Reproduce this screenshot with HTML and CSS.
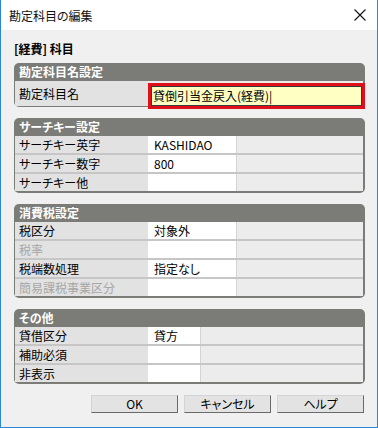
FILE: index.html
```html
<!DOCTYPE html>
<html lang="ja">
<head>
  <meta charset="UTF-8"/>
  <title>勘定科目の編集</title>
  <link rel="stylesheet" href="styles.css">
</head>
<body>
  <div class="window">
    <div class="titlebar">
      <span>勘定科目の編集</span>
      <svg class="close" width="12" height="12" viewBox="0 0 12 12">
        <path d="M0.5 0.5 L11.5 11.5 M11.5 0.5 L0.5 11.5" stroke="#111" stroke-width="1.1" fill="none"/>
      </svg>
    </div>

    <div class="content">
      <div class="heading">[経費] 科目</div>

      <!-- 勘定科目名設定 -->
      <div class="panel">
        <div class="panel-head">勘定科目名設定</div>
        <div class="row row-name">
          <div class="label">勘定科目名</div>
          <div class="name-cell">
            <div class="name-input">貸倒引当金戻入(経費)|</div>
          </div>
        </div>
      </div>

      <!-- サーチキー設定 -->
      <div class="panel">
        <div class="panel-head">サーチキー設定</div>
        <div class="row">
          <div class="label">サーチキー英字</div>
          <div class="value">KASHIDAO</div>
          <div class="rest"></div>
        </div>
        <div class="row">
          <div class="label">サーチキー数字</div>
          <div class="value">800</div>
          <div class="rest"></div>
        </div>
        <div class="row">
          <div class="label">サーチキー他</div>
          <div class="value"></div>
          <div class="rest"></div>
        </div>
      </div>

      <!-- 消費税設定 -->
      <div class="panel">
        <div class="panel-head">消費税設定</div>
        <div class="row">
          <div class="label">税区分</div>
          <div class="value">対象外</div>
          <div class="rest"></div>
        </div>
        <div class="row">
          <div class="label disabled">税率</div>
          <div class="value"></div>
          <div class="rest"></div>
        </div>
        <div class="row">
          <div class="label">税端数処理</div>
          <div class="value">指定なし</div>
          <div class="rest"></div>
        </div>
        <div class="row">
          <div class="label disabled">簡易課税事業区分</div>
          <div class="value"></div>
          <div class="rest"></div>
        </div>
      </div>

      <!-- その他 -->
      <div class="panel panel-other">
        <div class="panel-head">その他</div>
        <div class="row">
          <div class="label">貸借区分</div>
          <div class="value">貸方</div>
          <div class="rest"></div>
        </div>
        <div class="row">
          <div class="label">補助必須</div>
          <div class="value"></div>
          <div class="rest"></div>
        </div>
        <div class="row">
          <div class="label">非表示</div>
          <div class="value"></div>
          <div class="rest"></div>
        </div>
      </div>

      <div class="buttons">
        <button>OK</button>
        <button>キャンセル</button>
        <button>ヘルプ</button>
      </div>
    </div>
  </div>
</body>
</html>
```

FILE: styles.css
```css
* {
  box-sizing: border-box;
}

body {
  margin: 0;
  font-family: "Noto Sans CJK JP", "Noto Sans", sans-serif;
  font-size: 12px;
  font-feature-settings: "palt";
  color: #000;
  background-color: #f0f0f0;
}

.window {
  width: 378px;
  height: 428px;
  border: 1px solid #2b86d6;
  border-top: none;
  display: flex;
  flex-direction: column;
  background-color: #f0f0f0;
}

.titlebar {
  height: 30px;
  background-color: #fff;
  display: flex;
  justify-content: space-between;
  align-items: center;
  padding: 0 11px 0 8px;
  font-size: 12px;
  color: #111;
}

.content {
  flex-grow: 1;
  padding: 10px 12px 0 13px;
}

.heading {
  font-weight: bold;
  line-height: 18px;
  height: 18px;
  margin-bottom: 5px;
}

.panel {
  background-color: #7b7b77;
  border-radius: 5px;
  padding: 0 2px 2px 1px;
  margin-bottom: 11px;
}

.panel-head {
  height: 18px;
  line-height: 18px;
  color: #fff;
  font-weight: bold;
  padding-left: 4px;
}

.row {
  display: grid;
  grid-template-columns: 133px 89px 1fr;
  height: 19px;
  border-bottom: 2px solid #c6c6c6;
}

.row:last-child {
  border-bottom: none;
  height: 17px;
}

.label {
  background-color: #e2e2e2;
  padding-left: 4px;
  display: flex;
  align-items: center;
  white-space: nowrap;
}

.label.disabled {
  color: #a6a6a6;
}

.value {
  background-color: #fff;
  padding-left: 6px;
  line-height: 17px;
  border-right: 1px solid #d4d4d4;
}

.rest {
  background-color: #ececec;
}

.panel-other .row {
  grid-template-columns: 133px 53px 1fr;
}

.row-name {
  grid-template-columns: 133px 1fr;
}

.row.row-name:last-child {
  height: 24px;
}

.name-cell {
  background-color: #ececec;
  padding: 5px 1px 0 3px;
}

.name-input {
  height: 20px;
  line-height: 18px;
  background-color: #ffffc4;
  border: 1px solid #3a3a3a;
  outline: 3px solid #e0101a;
  padding-left: 1px;
}

.buttons {
  display: flex;
  justify-content: flex-end;
  gap: 6px;
  padding-right: 1px;
}

button {
  width: 87px;
  height: 18px;
  padding: 0;
  font-family: inherit;
  font-size: 12px;
  font-feature-settings: "palt";
  line-height: 16px;
  background-color: #e3e3e3;
  border: 1px solid;
  border-color: #d4d4d4 #6a6a6a #6a6a6a #d4d4d4;
}
```
